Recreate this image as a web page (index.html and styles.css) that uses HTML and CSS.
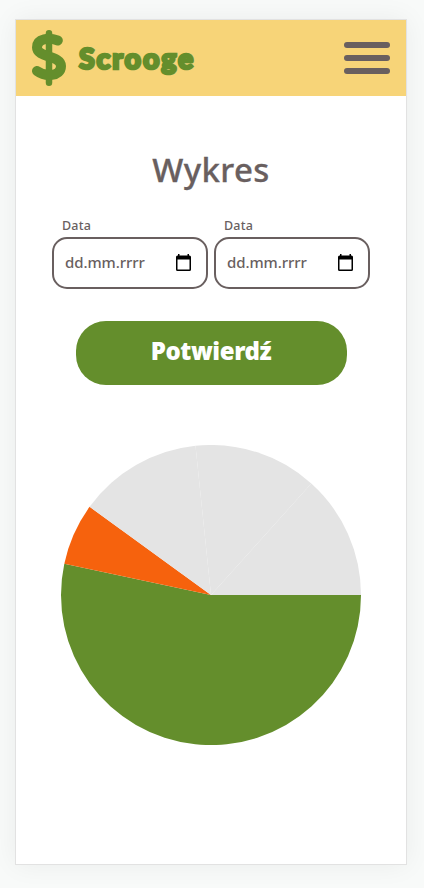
FILE: index.html
```html
<!DOCTYPE html>
<html lang="pl">
<head>
<meta charset="utf-8">
<title>Scrooge</title>
<link rel="stylesheet" href="styles.css">
</head>
<body>
<div class="phone">
  <header class="header">
    <svg class="logo" viewBox="0 0 34 56" fill="none" stroke="#648e2c" stroke-linecap="round">
      <path stroke-width="6.5" d="M17 3.3V52.7"/>
      <path stroke-width="10" d="M25.800 10.500C17 7.500 5 8 5 17.500C5 28 29 25 29 36C29 47 13 47 5 41"/>
    </svg>
    <span class="brand">Scrooge</span>
    <button class="menu" aria-label="Menu"><span></span><span></span><span></span></button>
  </header>
  <main class="main">
    <h1 class="title">Wykres</h1>
    <form class="form">
      <div class="dates">
        <div class="field">
          <span class="label">Data</span>
          <div class="input"><span>dd.mm.rrrr</span>
            <svg class="calendar" viewBox="0 0 15 17"><path fill-rule="evenodd" d="M2 0h1.500v1.500h8V0H13v1.500h.5Q15 1.500 15 3v12.500Q15 17 13.500 17h-12Q0 17 0 15.500V3Q0 1.500 1.500 1.500H2zM1.500 5.500v10h12v-10z"/></svg>
          </div>
        </div>
        <div class="field">
          <span class="label">Data</span>
          <div class="input"><span>dd.mm.rrrr</span>
            <svg class="calendar" viewBox="0 0 15 17"><path fill-rule="evenodd" d="M2 0h1.500v1.500h8V0H13v1.500h.5Q15 1.500 15 3v12.500Q15 17 13.500 17h-12Q0 17 0 15.500V3Q0 1.500 1.500 1.500H2zM1.500 5.500v10h12v-10z"/></svg>
          </div>
        </div>
      </div>
      <button class="submit" type="button"><span>Potwierdź</span></button>
    </form>
    <svg class="chart" viewBox="-150 -150 300 300">
      <path fill="#648e2c" d="M0 0H150A150 150 0 1 1 -146.700 -31.200Z"/>
      <path fill="#f6620d" d="M0 0L-146.700 -31.200A150 150 0 0 1 -121.400 -88.200Z"/>
      <path fill="#e4e4e4" d="M0 0L-121.400 -88.200A150 150 0 0 1 -15.500 -149.200Z"/>
      <path fill="#e4e4e4" d="M0 0L-15.500 -149.200A150 150 0 0 1 100.300 -111.500Z"/>
      <path fill="#e4e4e4" d="M0 0L100.300 -111.500A150 150 0 0 1 150 0Z"/>
    </svg>
  </main>
</div>
</body>
</html>
```
FILE: styles.css
```css
* { box-sizing: border-box; }
body {
  margin: 0;
  padding: 19px 17px 23px 15px;
  background: #f8faf9;
  color: #695f5f;
  font-family: "Noto Sans", "Open Sans", sans-serif;
}
.phone {
  height: 846px;
  border: 1px solid #e2e2e2;
  background: #fff;
  box-shadow: 0 0 25px rgba(0, 0, 0, .06);
}
.header {
  display: flex;
  align-items: center;
  height: 76px;
  padding: 0 16px;
  background: #f7d478;
}
.logo { width: 34px; height: 56px; }
.brand {
  margin-left: 13px;
  color: #648e2c;
  font: 900 28.5px/36px Lato, sans-serif;
  letter-spacing: 1.9px;
  -webkit-text-stroke: 2.6px #648e2c;
  stroke-linejoin: round;
  paint-order: stroke;
}
.menu {
  display: flex;
  flex-direction: column;
  gap: 7px;
  width: 46px;
  margin-left: auto;
  padding: 0;
  border: 0;
  background: none;
}
.menu span { width: 100%; height: 6px; border-radius: 3px; background: #695f5f; }
.main { display: flex; flex-direction: column; align-items: center; }
.title {
  margin: 50px 0 0;
  font-size: 33px;
  line-height: 48px;
  font-weight: 500;
  -webkit-text-stroke: .3px #695f5f;
  letter-spacing: .4px;
}
.form { display: flex; flex-direction: column; align-items: center; }
.dates { display: flex; gap: 6px; margin-top: 24px; }
.field { width: 156px; }
.label {
  display: block;
  height: 19px;
  padding-left: 10px;
  font-size: 12.5px;
  line-height: 15px;
  font-weight: 500;
  letter-spacing: .2px;
}
.input {
  display: flex;
  align-items: center;
  justify-content: space-between;
  height: 52px;
  padding: 0 15px 2px 11px;
  border: 2px solid #695f5f;
  border-radius: 15px;
  font-size: 15px;
  font-weight: 500;
  letter-spacing: -.08px;
}
.calendar { width: 15px; height: 17px; }
.submit {
  width: 271px;
  height: 64px;
  margin-top: 32px;
  padding: 0 0 5px;
  border: 0;
  border-radius: 30px;
  background: #648e2c;
  color: #fff;
  font: 900 24px/34px "Noto Sans", sans-serif;
  letter-spacing: -.4px;
}
.chart { width: 300px; height: 300px; margin-top: 60px; }
```
